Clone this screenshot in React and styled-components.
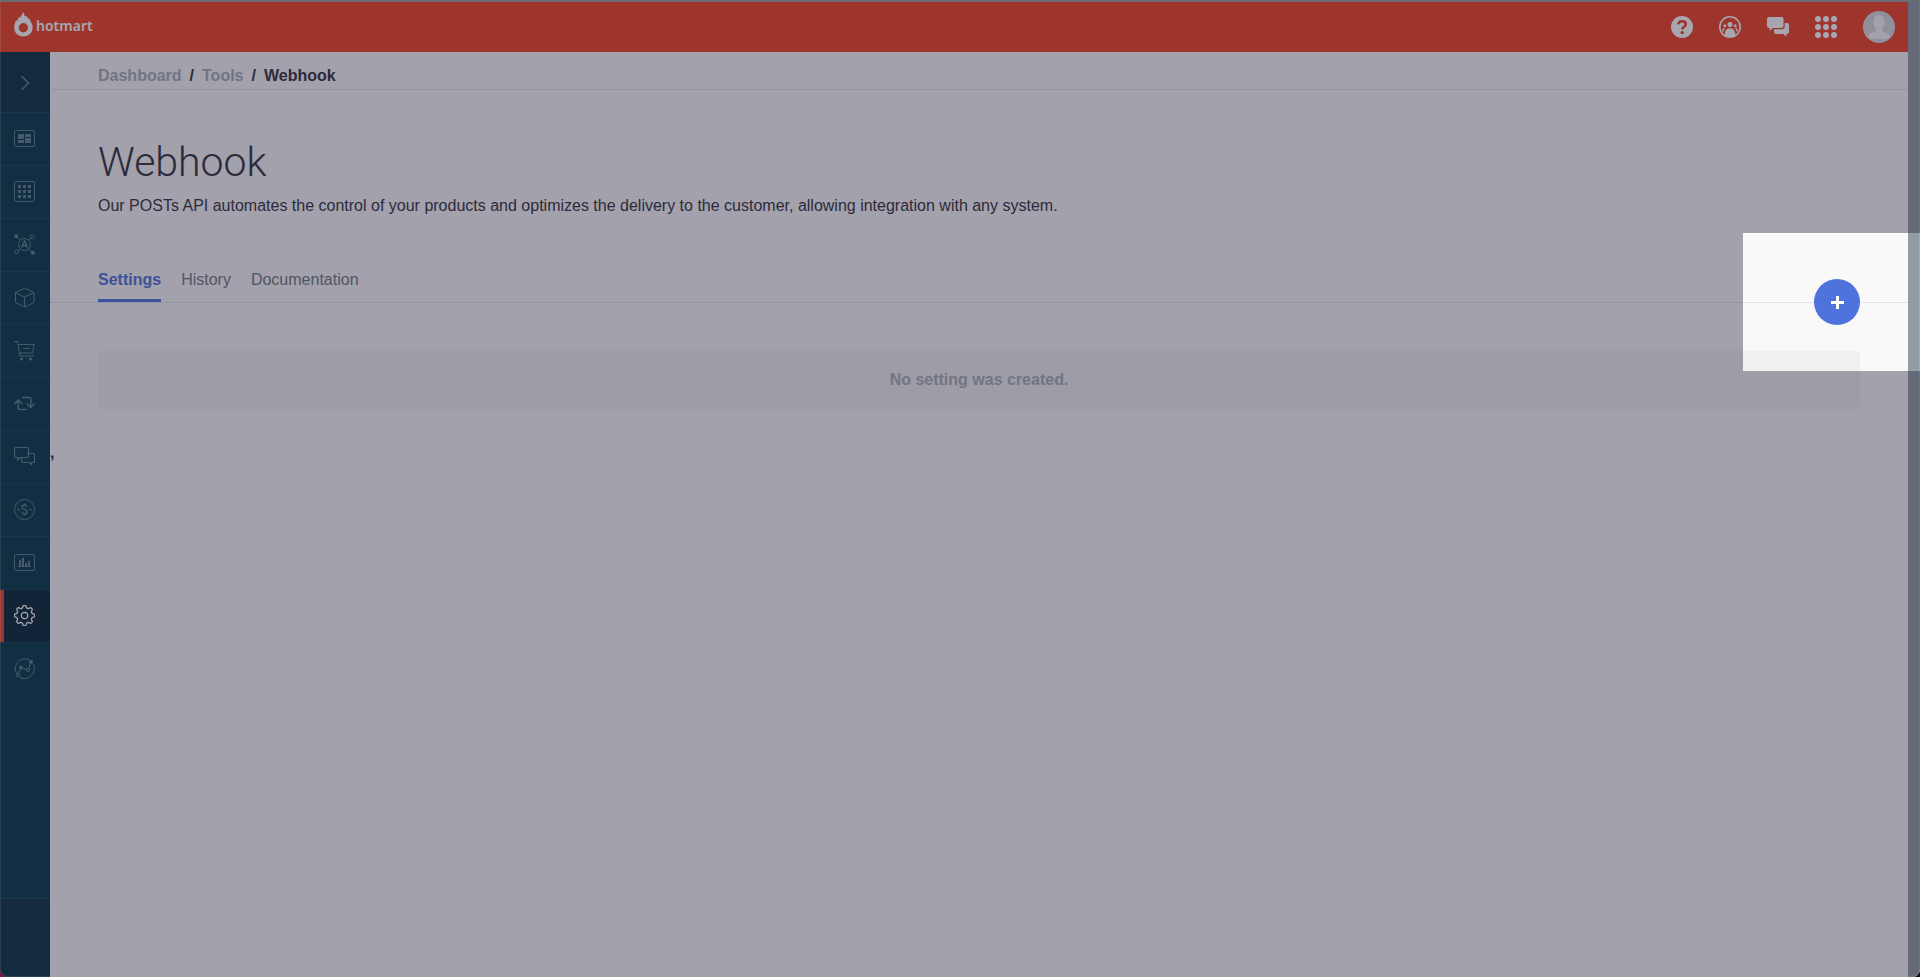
import React from "react";
import styled, { createGlobalStyle } from "styled-components";

const color = {
  red: "#f04526",
  side: "#07394a",
  sideDark: "#0b3445",
  sideActive: "#072837",
  sideLine: "#16485a",
  sideIcon: "#5c8491",
  page: "#f9f9f9",
  ink: "#34333f",
  muted: "#a4b0ba",
  tab: "#727a82",
  blue: "#4e73dc",
};

const GlobalStyle = createGlobalStyle`
  *, *::before, *::after { box-sizing: border-box; }
  body {
    margin: 0;
    background: linear-gradient(90deg, #7d1038 0%, #17121d 60%);
    font-family: "Liberation Sans", Arial, Helvetica, sans-serif;
    font-size: 16px;
    line-height: 20px;
    color: ${color.ink};
  }
`;

const Frame = styled.div`
  position: relative;
  display: flex;
  flex-direction: column;
  min-height: 100vh;
  overflow: hidden;
  border-top: 2px solid #6c6c75;
  border-radius: 0 0 8px 8px;
  background: ${color.page};
  &::after {
    content: "";
    position: absolute;
    inset: 0;
    border: 1px solid rgba(255, 255, 255, 0.16);
    border-top: 0;
    border-radius: 0 0 8px 8px;
    pointer-events: none;
  }
`;

const Columns = styled.div`
  display: flex;
  flex: 1;
`;

const Site = styled.div`
  display: flex;
  flex-direction: column;
  flex: 1;
  min-width: 0;
`;

const ScrollTrack = styled.div`
  width: 12px;
  background: #929da3;
`;

const TopBar = styled.header`
  display: flex;
  align-items: center;
  justify-content: space-between;
  height: 50px;
  padding: 0 13px 0 14px;
  background: ${color.red};
  color: #fff;
`;

const Logo = styled.a`
  display: flex;
  align-items: center;
  gap: 3px;
  padding-bottom: 6px;
  color: inherit;
  text-decoration: none;
  font: 600 14px/20px "Noto Sans", "Open Sans", sans-serif;
  span { padding-top: 4px; }
`;

const Actions = styled.nav`
  display: flex;
  align-items: center;
  gap: 26px;
`;

const IconButton = styled.button`
  display: flex;
  padding: 0;
  border: 0;
  background: none;
  color: inherit;
`;

const Body = styled.div`
  display: flex;
  flex: 1;
`;

const Sidebar = styled.aside`
  display: flex;
  flex-direction: column;
  width: 50px;
  background: ${color.side};
  color: ${color.sideIcon};
`;

const Toggle = styled(IconButton)`
  height: 60px;
  padding: 0 1px 0 0;
  align-items: center;
  justify-content: center;
  background: ${color.sideDark};
`;

const SideNav = styled.nav`
  flex: 1;
`;

const SideLink = styled.a`
  display: flex;
  align-items: center;
  justify-content: center;
  height: 53px;
  padding: 0 1px 1px 0;
  border-top: 1px solid ${color.sideLine};
  color: ${(p) => (p.$active ? "#fff" : "inherit")};
  background: ${(p) => (p.$active ? color.sideActive : "none")};
  box-shadow: ${(p) => (p.$active ? `inset 4px 0 ${color.red}` : "none")};
`;

const SideFooter = styled.div`
  height: 79px;
  border-top: 1px solid ${color.sideLine};
  background: ${color.sideDark};
`;

const Main = styled.main`
  flex: 1;
  min-width: 0;
`;

const Breadcrumb = styled.nav`
  display: flex;
  gap: 8px;
  height: 38px;
  padding: 14px 48px 0;
  border-bottom: 1px solid #dfdfe2;
  border-radius: 0 0 4px 4px;
  font-weight: bold;
  a { color: ${color.muted}; text-decoration: none; }
`;

const Intro = styled.section`
  padding: 48px 48px 0;
`;

const Title = styled.h1`
  margin: 0;
  font: 300 41px/48px Roboto, "Liberation Sans", sans-serif;
`;

const Lead = styled.p`
  margin: 10px 0 0;
`;

const TabBar = styled.div`
  display: flex;
  align-items: flex-end;
  justify-content: space-between;
  height: 87px;
  padding: 0 48px;
  border-bottom: 1px solid #dae6f0;
`;

const Tabs = styled.nav`
  display: flex;
  gap: 20px;
`;

const Tab = styled.a`
  height: 33px;
  padding-top: 1px;
  color: ${(p) => (p.$active ? color.blue : color.tab)};
  font-weight: ${(p) => (p.$active ? "bold" : "normal")};
  border-bottom: 3px solid ${(p) => (p.$active ? color.blue : "transparent")};
  text-decoration: none;
`;

const Highlighted = styled.div`
  position: relative;
  margin-bottom: -23px;
`;

const AddButton = styled.button`
  display: flex;
  align-items: center;
  justify-content: center;
  width: 46px;
  height: 46px;
  padding: 0;
  border: 0;
  border-radius: 50%;
  background: ${color.blue};
  color: #fff;
`;

const Spotlight = styled.div`
  position: absolute;
  z-index: 2;
  top: -46px;
  right: -60px;
  width: 177px;
  height: 138px;
  box-shadow: 0 0 0 4000px rgba(34, 29, 54, 0.4);
  pointer-events: none;
`;

const EmptyNotice = styled.p`
  margin: 48px 48px 34px;
  padding: 19px;
  border-radius: 4px;
  background: #f0f0f0;
  color: ${color.muted};
  font-weight: bold;
  text-align: center;
`;

const Remark = styled.div`
  font-weight: bold;
`;

const Svg = ({ size = 21, children, ...rest }) => (
  <svg width={size} height={size} viewBox={`0 0 ${size} ${size}`} fill="none" stroke="currentColor" strokeWidth="1" aria-hidden="true" {...rest}>
    {children}
  </svg>
);

const Flame = () => (
  <svg width="19" height="25" viewBox="0 0 19 25" fill="currentColor" aria-hidden="true">
    <path fillRule="evenodd" d="M9.800 0c.4 1.800.4 3.300 1.500 4.800.4-.4.6-.9.700-1.400 1.200 1 1.700 2.300 2.200 3.700.5-.3.8-.7.9-1.200 1 1.400 1.200 2.700 1.700 4.200 1.300 1.500 1.800 3.400 1.800 5.400 0 5.300-4 9-9.300 9C4 24.500.2 20.800.2 15.500c0-3.200.9-5.400 2.300-7.400.1.600.4 1 .8 1.300C3.500 7.500 4.500 6 5.500 4.800c.1.500.3.900.7 1.200C6.500 3.800 8.300 2.500 9.800 0ZM9.400 11a4.700 4.700 0 1 0 0 9.400 4.700 4.700 0 0 0 0-9.400Z" />
  </svg>
);

const HelpIcon = () => (
  <Svg size={22} stroke="none">
    <circle cx="11" cy="11" r="11" fill="currentColor" />
    <path d="M7.300 8.300C7.600 6 9 5.200 11 5.200c2.300 0 3.800 1.200 3.800 3 0 2.700-3.600 2.400-3.600 5.300" stroke={color.red} strokeWidth="2.600" />
    <circle cx="11.200" cy="16.600" r="1.700" fill={color.red} />
  </Svg>
);

const CommunityIcon = () => (
  <Svg size={22} fill="currentColor" stroke="none">
    <circle cx="11" cy="11" r="10.200" fill="none" stroke="currentColor" strokeWidth="1.600" />
    <circle cx="11" cy="8.600" r="2.500" />
    <circle cx="5.800" cy="9.700" r="1.500" />
    <circle cx="16.200" cy="9.700" r="1.500" />
    <path d="M5.600 19.500c0-4.700 1.800-7.300 5.400-7.300s5.400 2.600 5.400 7.300c-3 2.300-7.800 2.300-10.800 0ZM3 15.500c0-2.500 1-3.600 3.400-3.400-1.200 1-1.700 2-1.900 3.400ZM19 15.500c0-2.500-1-3.600-3.400-3.400 1.200 1 1.700 2 1.900 3.400Z" />
  </Svg>
);

const ChatsIcon = () => (
  <Svg size={22} fill="currentColor" stroke="none">
    <path d="M2 1h12.500a2 2 0 0 1 2 2v7a2 2 0 0 1-2 2H6l-3.300 3V12H2a2 2 0 0 1-2-2V3a2 2 0 0 1 2-2Z" />
    <path d="M17.700 7H20a2 2 0 0 1 2 2v7a2 2 0 0 1-2 2h-.5v2.800L16 18H9a2 2 0 0 1-2-2v-2.800h7.700a3 3 0 0 0 3-3Z" />
  </Svg>
);

const AppsIcon = () => (
  <Svg size={22} fill="currentColor" stroke="none">
    {[3, 11, 19].map((y) => [3, 11, 19].map((x) => <circle key={`${x}-${y}`} cx={x} cy={y} r="3" />))}
  </Svg>
);

const Avatar = () => (
  <Svg size={32} stroke="none">
    <circle cx="16" cy="16" r="16" fill="#d9dbe0" />
    <path fill="#f8f8fa" d="M16 4c3.500 0 5.500 2.500 5.500 6.500 0 3-1 5.500-2.500 7v2c1 1.700 6.500 2.500 8.500 5.500a14 14 0 0 1-3.500 3h-16a14 14 0 0 1-3.500-3c2-3 7.500-3.800 8.500-5.500v-2c-1.500-1.500-2.500-4-2.500-7C10.500 6.500 12.500 4 16 4Z" />
  </Svg>
);

const gear = Array.from({ length: 96 }, (_, i) => {
  const a = (i / 96) * Math.PI * 2;
  const r = 8.900 + 1.200 * Math.tanh(2.200 * Math.cos(8 * a));
  return `${(10.500 + r * Math.sin(a)).toFixed(2)},${(10.500 - r * Math.cos(a)).toFixed(2)}`;
}).join(" ");

const sections = [
  ["Overview", <>
    <rect x=".5" y="2.500" width="20" height="16" rx="2" />
    <path fill="currentColor" stroke="none" d="M4 6h6v5H4zM11 6h6v3h-6zM4 12h6v3H4zM11 10h6v5h-6z" />
  </>],
  ["Apps", <>
    <rect x=".5" y=".5" width="20" height="20" rx="2" />
    <path fill="currentColor" stroke="none" d="M4 4h3v3H4zM9 4h3v3H9zM14 4h3v3h-3zM4 9h3v3H4zM9 9h3v3H9zM14 9h3v3h-3zM4 14h3v3H4zM9 14h3v3H9zM14 14h3v3h-3z" />
  </>],
  ["Affiliates", <>
    <circle cx="10.500" cy="10.500" r="6" />
    <path strokeWidth="1.400" d="M7.500 13.500 10.500 7l3 6.500M8.500 11.700h4" />
    <path d="M3 3l3.300 3.300M17 4l-2.300 2.300M4 17l2.300-2.300M18 18l-3.300-3.300" />
    <circle cx="2.200" cy="2.200" r="2" fill="currentColor" stroke="none" />
    <circle cx="18.800" cy="18.800" r="2" fill="currentColor" stroke="none" />
    <circle cx="18.400" cy="2.600" r="1.900" />
    <circle cx="2.600" cy="17.600" r="1.900" />
  </>],
  ["Products", <path d="M10.500 1.200 20 5.500v10L10.500 20 1.500 15.500v-10ZM1.500 5.500l9 4.500L20 5.500M10.500 10v10" />],
  ["Sales", <>
    <path d="M0 1.500h3.500L6 16h14M4.300 4.500h16L18.500 13H5.700M9 8.500h7" />
    <circle cx="7.500" cy="19" r="1.500" fill="currentColor" stroke="none" />
    <circle cx="16.500" cy="19" r="1.500" fill="currentColor" stroke="none" />
  </>],
  ["Subscriptions", <path strokeWidth="1.400" d="M.5 11 4.200 7l3.900 4M4.200 7.500V15q0 1.500 1.500 1.500H13M8 4.500h7.300q1.500 0 1.500 1.500v8M12.800 10.500l4 4 3.700-4" />],
  ["Messages", <>
    <path strokeWidth="1.200" d="M2 1.500h11a1.500 1.500 0 0 1 1.500 1.500v7a1.500 1.500 0 0 1-1.500 1.500H6l-2.500 2.300v-2.300H2A1.500 1.500 0 0 1 .5 10V3A1.500 1.500 0 0 1 2 1.500Z" />
    <path strokeWidth="1.200" d="M14.500 7.500H19A1.500 1.500 0 0 1 20.500 9v6a1.500 1.500 0 0 1-1.500 1.500h-1.500v2L15 16.500H9A1.500 1.500 0 0 1 7.500 15v-3.500" />
  </>],
  ["Finance", <>
    <circle cx="10.500" cy="10.500" r="10" />
    <path strokeWidth="1.300" d="M13 7.500C12.500 6.500 11.700 6 10.500 6 9 6 8 6.800 8 8.100c0 2.900 5.200 1.700 5.200 4.600 0 1.400-1.100 2.300-2.700 2.300-1.500 0-2.500-.7-2.900-1.900M10.500 4.500V6M10.500 15v1.500M3.500 10.500h2M15.500 10.500h2" />
  </>],
  ["Reports", <>
    <rect x=".5" y="2.500" width="20" height="16" rx="2" />
    <path fill="currentColor" stroke="none" d="M4 14h13v1H4zM5 8h2v6H5zM8 6h2v8H8zM11 11h2v3h-2zM14 9h2v5h-2z" />
  </>],
  ["Tools", <>
    <polygon points={gear} strokeWidth="1.300" strokeLinejoin="round" />
    <circle cx="10.500" cy="10.500" r="3.200" strokeWidth="1.200" />
  </>],
  ["Analytics", <>
    <path d="M2.500 15.500A10 10 0 0 1 15 1.600M19.500 6.500A10 10 0 0 1 6 19.500M4.500 15.500 7 10.500M8.500 10.500l4.500 1.300M15 10.500l1.500-5" />
    <circle cx="7" cy="9.500" r="1.900" fill="currentColor" stroke="none" />
    <circle cx="17" cy="4" r="2" fill="currentColor" stroke="none" />
    <circle cx="14" cy="12" r="1.600" />
    <circle cx="4" cy="17" r="1.700" />
  </>],
];

export default function App() {
  return (
    <>
      <GlobalStyle />
      <Frame>
        <Columns>
          <Site>
            <TopBar>
              <Logo href="#home"><Flame /><span>hotmart</span></Logo>
              <Actions aria-label="Account">
                <IconButton aria-label="Help"><HelpIcon /></IconButton>
                <IconButton aria-label="Community"><CommunityIcon /></IconButton>
                <IconButton aria-label="Messages"><ChatsIcon /></IconButton>
                <IconButton aria-label="Apps"><AppsIcon /></IconButton>
                <IconButton aria-label="Profile"><Avatar /></IconButton>
              </Actions>
            </TopBar>
            <Body>
              <Sidebar>
                <Toggle aria-label="Expand menu">
                  <Svg strokeWidth="1.500"><path d="M7.500 4l7 7-7 7" /></Svg>
                </Toggle>
                <SideNav aria-label="Sections">
                  {sections.map(([name, drawing]) => (
                    <SideLink key={name} href={`#${name}`} aria-label={name} $active={name === "Tools"}>
                      <Svg>{drawing}</Svg>
                    </SideLink>
                  ))}
                </SideNav>
                <SideFooter />
              </Sidebar>
              <Main>
                <Breadcrumb aria-label="Breadcrumb">
                  <a href="#dashboard">Dashboard</a>
                  <span>/</span>
                  <a href="#tools">Tools</a>
                  <span>/</span>
                  <span aria-current="page">Webhook</span>
                </Breadcrumb>
                <Intro>
                  <Title>Webhook</Title>
                  <Lead>
                    Our POSTs API automates the control of your products and optimizes the delivery to the
                    customer, allowing integration with any system.
                  </Lead>
                </Intro>
                <TabBar>
                  <Tabs>
                    <Tab href="#settings" $active>Settings</Tab>
                    <Tab href="#history">History</Tab>
                    <Tab href="#documentation">Documentation</Tab>
                  </Tabs>
                  <Highlighted>
                    <AddButton aria-label="Add setting">
                      <Svg size={13} strokeWidth="3"><path d="M6.500 0v13M0 6.500h13" /></Svg>
                    </AddButton>
                    <Spotlight />
                  </Highlighted>
                </TabBar>
                <EmptyNotice>No setting was created.</EmptyNotice>
                <Remark>,</Remark>
              </Main>
            </Body>
          </Site>
          <ScrollTrack />
        </Columns>
      </Frame>
    </>
  );
}
